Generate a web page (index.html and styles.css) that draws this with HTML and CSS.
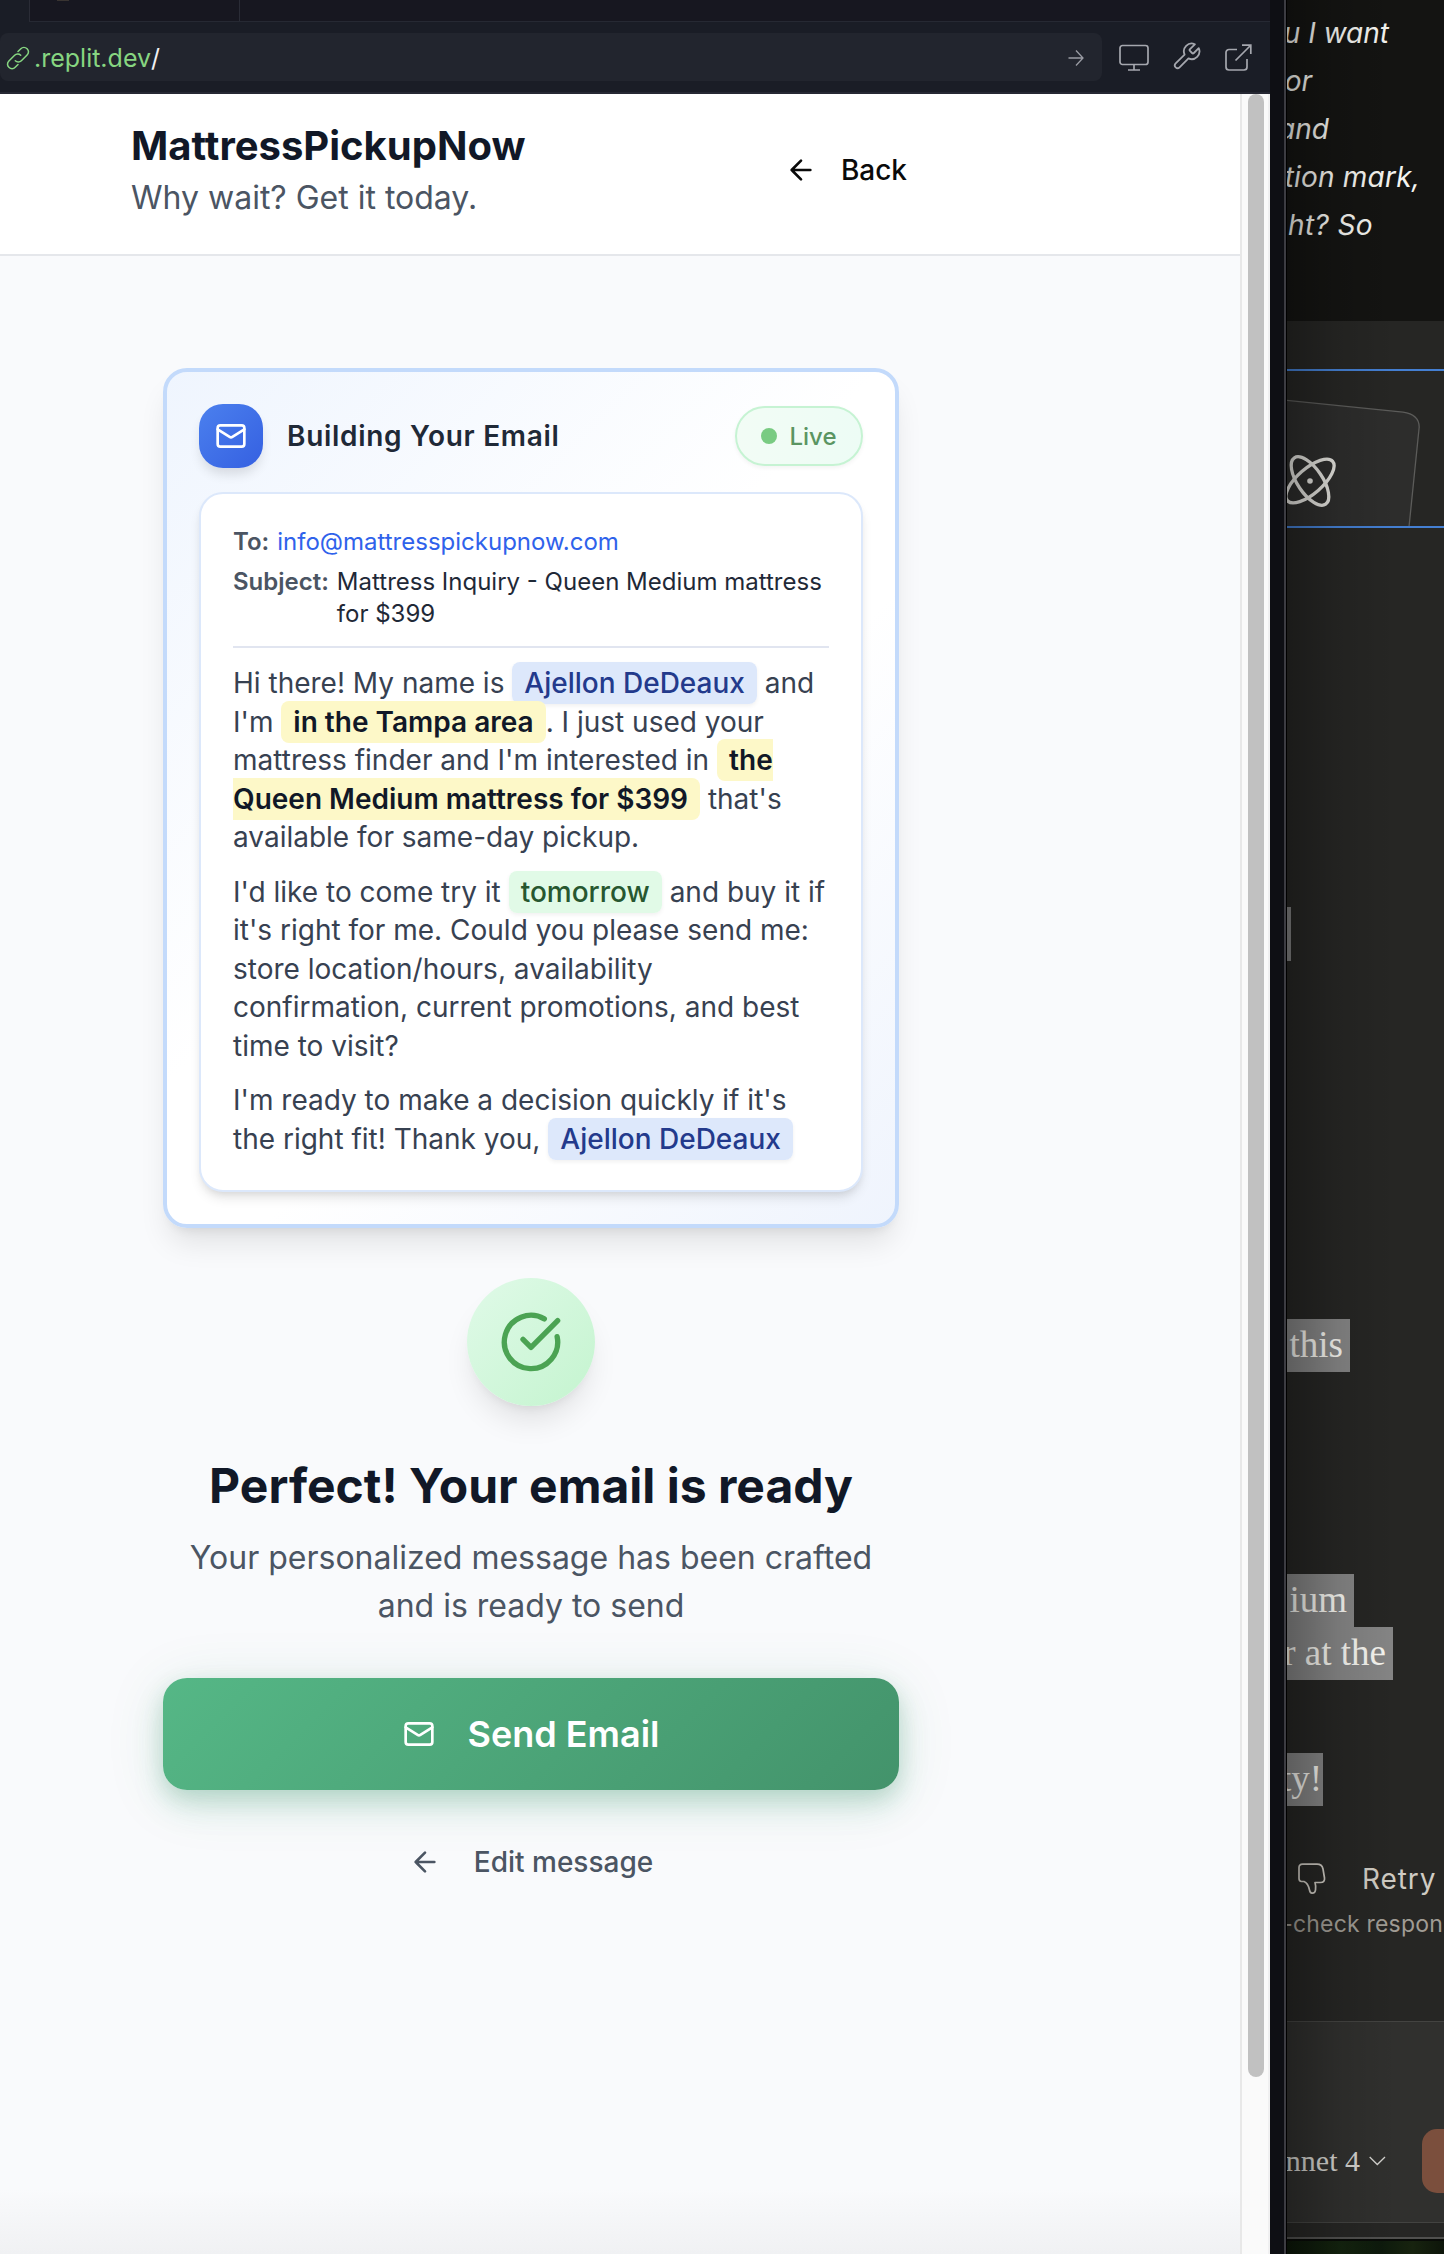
FILE: index.html
```html
<!DOCTYPE html>
<html lang="en">
<head>
<meta charset="utf-8">
<title>MattressPickupNow</title>
<link rel="stylesheet" href="styles.css">
</head>
<body>
<div class="desktop">
  <section class="browser">
    <div class="tabs"><div class="tab"><i class="tab-mark"></i></div></div>
    <div class="toolbar">
      <div class="url">
        <svg class="link-icon" viewBox="0 0 24 24" fill="none" stroke="currentColor" stroke-width="1.4" stroke-linecap="round"><path d="M9.5 14.5c1.6 1.6 4.2 1.4 5.6 0l5.3-5.3c1.7-1.7 1.7-4.2 0-5.8s-4.200-1.600-5.800 0l-2.600 2.600"/><path d="M14.500 9.500c-1.600-1.600-4.200-1.400-5.600 0l-5.300 5.300c-1.700 1.700-1.700 4.200 0 5.800s4.200 1.600 5.800 0l2.600-2.600"/></svg>
        <span class="host">.replit.dev</span><span class="path">/</span>
        <svg class="go" viewBox="0 0 16 18" fill="none" stroke="currentColor" stroke-width="1.300"><path d="M0.500 9h14.500M8 1.500L15 9l-7 7.500"/></svg>
      </div>
      <svg class="tool monitor" viewBox="0 0 30 28" fill="none" stroke="currentColor" stroke-width="1.700"><rect x="1" y="1.500" width="28" height="19" rx="2.500"/><path d="M15 20.500v5.500M9 26h12"/></svg>
      <svg class="tool wrench" viewBox="0 0 24 24" fill="none" stroke="currentColor" stroke-width="1.400" stroke-linejoin="round"><path d="M14.700 6.300a1 1 0 0 0 0 1.400l1.600 1.600a1 1 0 0 0 1.400 0l3.770-3.770a6 6 0 0 1-7.940 7.940l-6.910 6.910a2.120 2.120 0 0 1-3-3l6.910-6.910a6 6 0 0 1 7.940-7.940l-3.760 3.760z"/></svg>
      <svg class="tool external" viewBox="0 0 27 27" fill="none" stroke="currentColor" stroke-width="1.700"><path d="M12 5.500H4a3 3 0 0 0-3 3V23a3 3 0 0 0 3 3h15a3 3 0 0 0 3-3v-8M17 1.200h8.800V10M25.500 1.500L10.500 16.500"/></svg>
    </div>
    <div class="viewport">
      <div class="page">
        <header class="site-header">
          <div>
            <h1>MattressPickupNow</h1>
            <p class="tagline">Why wait? Get it today.</p>
          </div>
          <div class="back">
            <svg class="icon32" viewBox="0 0 24 24" fill="none" stroke="currentColor" stroke-width="2" stroke-linecap="round" stroke-linejoin="round"><path d="m12 19-7-7 7-7M19 12H5"/></svg>
            <span>Back</span>
          </div>
        </header>
        <main>
          <section class="card">
            <div class="card-head">
              <div class="badge"><svg class="icon32" viewBox="0 0 24 24" fill="none" stroke="currentColor" stroke-width="2" stroke-linecap="round" stroke-linejoin="round"><rect x="2" y="4" width="20" height="16" rx="2"/><path d="m22 7-8.970 5.700a1.940 1.940 0 0 1-2.060 0L2 7"/></svg></div>
              <h2>Building Your Email</h2>
              <div class="live"><i></i><span>Live</span></div>
            </div>
            <div class="mail">
              <div class="meta">
                <div class="row"><b>To:</b><span class="addr">info@mattresspickupnow.com</span></div>
                <div class="row subject"><b>Subject:</b><span>Mattress Inquiry - Queen Medium mattress<br>for $399</span></div>
              </div>
              <div class="body">
                <p>Hi there! My name is <span class="hl name">Ajellon DeDeaux</span> and<br>I'm <span class="hl fact">in the Tampa area</span>. I just used your<br>mattress finder and I'm interested in <span class="hl fact">the<br>Queen Medium mattress for $399</span> that's<br>available for same-day pickup.</p>
                <p>I'd like to come try it <span class="hl when">tomorrow</span> and buy it if<br>it's right for me. Could you please send me:<br>store location/hours, availability<br>confirmation, current promotions, and best<br>time to visit?</p>
                <p>I'm ready to make a decision quickly if it's<br>the right fit! Thank you, <span class="hl name">Ajellon DeDeaux</span></p>
              </div>
            </div>
          </section>
          <div class="success"><svg viewBox="0 0 24 24" fill="none" stroke="currentColor" stroke-width="2" stroke-linecap="round" stroke-linejoin="round"><path d="M21.801 10A10 10 0 1 1 17 3.335"/><path d="m9 11 3 3L22 4"/></svg></div>
          <h3>Perfect! Your email is ready</h3>
          <p class="ready">Your personalized message has been crafted<br>and is ready to send</p>
          <div class="send">
            <svg class="icon32" viewBox="0 0 24 24" fill="none" stroke="currentColor" stroke-width="2" stroke-linecap="round" stroke-linejoin="round"><rect x="2" y="4" width="20" height="16" rx="2"/><path d="m22 7-8.970 5.700a1.940 1.940 0 0 1-2.060 0L2 7"/></svg>
            <span>Send Email</span>
          </div>
          <div class="edit">
            <svg class="icon32" viewBox="0 0 24 24" fill="none" stroke="currentColor" stroke-width="2" stroke-linecap="round" stroke-linejoin="round"><path d="m12 19-7-7 7-7M19 12H5"/></svg>
            <span>Edit message</span>
          </div>
        </main>
      </div>
      <div class="scroll"><i></i></div>
    </div>
  </section>
  <div class="edge"></div>
  <aside class="chat">
    <div class="quote">
      <p class="q1">u I want</p><p class="q2">or</p><p class="q3">and</p><p class="q4">tion mark,</p><p class="q5">ht? So</p>
    </div>
    <div class="artifact">
      <svg viewBox="0 0 157 155" fill="none"><path d="M-1 29.300L116 41.200Q132 43.500 132.200 56L122 156H-1z" fill="#2d2d2c" stroke="#5c5c5a" stroke-width="1.300"/><g stroke="#e4e3de" stroke-width="3.300"><ellipse cx="23" cy="110" rx="28" ry="12.500" transform="rotate(56 23 110)"/><ellipse cx="23" cy="110" rx="30" ry="12.500" transform="rotate(-41 23 110)"/></g><circle cx="23" cy="110" r="2.800" fill="#e4e3de"/></svg>
    </div>
    <div class="reply">
      <i class="bar"></i>
      <p class="sel s1">this</p>
      <p class="sel s2">ium</p>
      <p class="sel s3">r at the</p>
      <p class="sel s4">ty!</p>
      <div class="actions">
        <svg viewBox="0 0 28 32" fill="none" stroke="currentColor" stroke-width="1.700" stroke-linejoin="round"><path d="M1 4.500Q1 1.200 4.500 1.200H19Q24 1.200 25 6L26.500 15Q27 19.500 22.500 19.500H17Q18 22.500 17.500 27Q17 30.500 14 30.200Q12 30 11.500 27Q10 20 6 18.500H3.500Q1 18.500 1 15.500z"/></svg>
        <span>Retry</span>
      </div>
      <p class="note">e-check respon</p>
    </div>
    <div class="composer">
      <span>nnet 4</span>
      <svg viewBox="0 0 17 10" fill="none" stroke="currentColor" stroke-width="1.300"><path d="M.7 1l7.600 7.500L16 1"/></svg>
      <i class="submit"></i>
    </div>
    <div class="foot"></div>
    <div class="wallpaper"></div>
  </aside>
</div>
</body>
</html>
```
FILE: styles.css
```css
* { box-sizing: border-box; margin: 0; padding: 0; }
body { width: 1444px; height: 2254px; overflow: hidden; background: #262624; font-family: Inter, "Liberation Sans", sans-serif; }
svg { display: block; flex: none; }
.desktop { display: flex; width: 1444px; height: 2254px; }
.icon32 { width: 32px; height: 32px; }

/* Browser pane */
.browser { width: 1270px; display: flex; flex-direction: column; background: #1a1d26; }
.tabs { height: 22px; margin-left: 29px; background: #171720; border-left: 1px solid #2a2c36; border-bottom: 1px solid #262933; }
.tab { width: 210px; height: 21px; border-right: 1px solid #2a2c36; }
.tab-mark { display: block; width: 12px; height: 1px; margin-left: 27px; background: #393431; }
.toolbar { height: 72px; padding-top: 11px; display: flex; align-items: flex-start; border-bottom: 2px solid #262833; color: #a5a7ae; }
.url { width: 1102px; height: 48px; border-radius: 8px; background: #22252e; display: flex; align-items: center; padding: 1px 18px 0 5px; font-size: 25px; }
.link-icon { width: 26px; height: 26px; color: #87d681; margin-right: 3px; }
.host { color: #87d681; }
.path { color: #f0f0f2; }
.go { width: 16px; height: 18px; margin-left: auto; color: #9a9ca4; }
.tool { margin-top: 11px; }
.monitor { width: 30px; height: 28px; margin-left: 17px; }
.wrench { width: 31px; height: 31px; margin: 8px 0 0 22px; }
.external { width: 27px; height: 27px; margin-left: 23px; }

.viewport { flex: 1; display: flex; }
.page { width: 1240px; background: linear-gradient(#f9fafc 97%, #f0f1f3); }
.scroll { width: 30px; background: #fafafa; border-left: 2px solid #e8e8e8; border-right: 2px solid #f0f0f1; padding-left: 6px; }
.scroll i { display: block; width: 16px; height: 1983px; border-radius: 8px; background: #c1c1c1; }

.site-header { height: 162px; background: #fff; border-bottom: 2px solid #e5e7eb; padding: 24px 333px 0 131px; display: flex; justify-content: space-between; }
.site-header h1 { font-size: 40px; line-height: 56px; font-weight: 700; color: #111827; }
.tagline { font-size: 32px; line-height: 48px; color: #4b5563; }
.back { height: 104px; display: flex; align-items: center; gap: 24px; font-size: 28px; font-weight: 500; color: #0a0a0a; }

main { width: 736px; margin: 112px 0 0 163px; }
.card { height: 860px; border: 4px solid #c3dafb; border-radius: 24px; padding: 32px; background: linear-gradient(135deg, #eff5fe, #fff 45%, #fff 60%, #eff4fd); box-shadow: 0 20px 30px -6px rgba(0,0,0,.1), 0 8px 12px -8px rgba(0,0,0,.1); }
.card-head { height: 64px; display: flex; align-items: center; }
.badge { width: 64px; height: 64px; border-radius: 24px; display: grid; place-items: center; color: #fff; background: linear-gradient(135deg, #4b80ee, #3560e1); box-shadow: 0 8px 12px -2px rgba(0,0,0,.12); }
h2 { font-size: 28px; font-weight: 600; color: #1f2937; letter-spacing: .7px; margin-left: 24px; }
.live { margin-left: auto; width: 128px; height: 60px; border: 2px solid #c6f3d3; border-radius: 30px; background: linear-gradient(90deg, #f2fcf5, #edfcf5); display: flex; align-items: center; justify-content: center; gap: 12px; font-size: 24px; font-weight: 500; color: #5a9562; box-shadow: 0 2px 4px rgba(0,0,0,.05); }
.live i { width: 16px; height: 16px; border-radius: 50%; background: #79cb82; }
.mail { margin-top: 24px; height: 700px; background: #fff; border: 2px solid #dce8fb; border-radius: 24px; padding: 32px; box-shadow: 0 8px 12px -2px rgba(0,0,0,.1), 0 4px 8px -4px rgba(0,0,0,.1); }
.meta { height: 122px; border-bottom: 2px solid #e1e5f0; font-size: 24px; line-height: 32px; color: #1f2937; }
.row { display: flex; gap: 8px; white-space: nowrap; }
.subject { margin-top: 8px; }
.row b { font-weight: 600; color: #4b5563; }
.addr { color: #2f62eb; }
.body { margin-top: 16px; font-size: 28px; line-height: 38.5px; color: #374151; white-space: nowrap; }
.body p + p { margin-top: 16px; }
.hl { padding: 4px 12px; border-radius: 8px; font-weight: 500; }
.name { background: #dde8fb; color: #233a8c; box-shadow: 0 2px 4px rgba(0,0,0,.06); }
.fact { background: #fdf8c8; color: #111827; font-weight: 600; }
.when { background: #e1fae7; color: #275730; box-shadow: 0 2px 4px rgba(0,0,0,.06); }

.success { width: 128px; height: 128px; margin: 50px auto 0; border-radius: 50%; display: grid; place-items: center; color: #4ba353; background: linear-gradient(135deg, #e0fae8, #c4f4cf); box-shadow: 0 20px 30px -6px rgba(0,0,0,.1), 0 8px 12px -8px rgba(0,0,0,.1); }
.success svg { width: 64px; height: 64px; }
h3 { margin-top: 48px; font-size: 48px; line-height: 64px; font-weight: 700; color: #111827; text-align: center; white-space: nowrap; }
.ready { margin-top: 16px; font-size: 32px; line-height: 48px; color: #4b5563; text-align: center; white-space: nowrap; }
.send { margin-top: 48px; height: 112px; border-radius: 24px; background: linear-gradient(135deg, #55b786, #43936b); color: #fff; font-size: 36px; font-weight: 600; display: flex; align-items: center; justify-content: center; gap: 33px; box-shadow: 0 16px 32px rgba(16,150,90,.13), 0 8px 60px rgba(30,130,80,.12), 0 8px 20px rgba(30,110,70,.14); }
.edit { margin-top: 40px; height: 64px; display: flex; align-items: center; justify-content: center; gap: 33px; font-size: 28px; font-weight: 500; color: #4b5563; }

/* Window edge */
.edge { width: 17px; background: #0e0f14; border-right: 1px solid #000; box-shadow: inset -2px 0 #3c3c42; }

/* Chat window partly covered by the browser */
.chat { position: relative; width: 157px; overflow: hidden; background: #262624; white-space: nowrap; }
.chat::after { content: ""; position: absolute; inset: 0; background: linear-gradient(90deg, rgba(0,0,0,.3), rgba(0,0,0,.1) 50px, transparent 110px); }
.chat p { display: flex; justify-content: flex-end; }
.quote { height: 321px; padding-top: 9px; background: #141412; color: #f5f4f0; font-size: 28px; line-height: 48px; font-style: italic; }
.q1 { width: 102px; } .q2 { width: 25px; } .q3 { width: 42px; } .q4 { width: 133px; letter-spacing: .2px; } .q5 { width: 86px; letter-spacing: .4px; }
.artifact { margin-top: 48px; height: 159px; border-top: 2px solid #447fd2; border-bottom: 2px solid #447fd2; }
.artifact svg { width: 157px; height: 155px; }
.reply { height: 1493px; padding-top: 379px; }
.bar { display: block; width: 4px; height: 54px; background: #808080; }
.sel { height: 53px; background: #858585; color: #f6f5f0; font-family: "Liberation Serif", serif; font-size: 37px; line-height: 51px; padding-right: 7px; }
.s1 { width: 63px; margin-top: 358px; }
.s2 { width: 67px; margin-top: 202px; }
.s3 { width: 106px; }
.s4 { width: 36px; margin-top: 73px; padding-right: 1px; }
.actions { display: flex; align-items: center; height: 40px; margin: 53px 0 0 11px; color: #cfcbc3; font-size: 28px; letter-spacing: .9px; }
.actions svg { width: 28px; height: 32px; margin-right: 36px; }
.note { width: 156px; margin-top: 9px; color: #a09c94; font-size: 23px; line-height: 32px; letter-spacing: .2px; }
.composer { height: 202px; border-top: 1px solid #434341; border-bottom: 1px solid #434341; background: #30302e; color: #d4d3cf; display: flex; align-items: center; padding-top: 77px; font-family: "Liberation Serif", serif; font-size: 30px; }
.composer span { width: 73px; display: flex; justify-content: flex-end; }
.composer svg { width: 17px; height: 10px; margin-left: 9px; }
.submit { width: 80px; height: 64px; flex: none; margin-left: 36px; border-radius: 15px; background: #7b4f3d; }
.foot { height: 16px; border-bottom: 2px solid #50504e; background: #262624; }
.wallpaper { height: 16px; border-top: 2px solid #080a07; background: linear-gradient(90deg, #0b1609, #14240f 35%, #0d1a0c 60%, #17230f 80%, #0d150a); }
```
